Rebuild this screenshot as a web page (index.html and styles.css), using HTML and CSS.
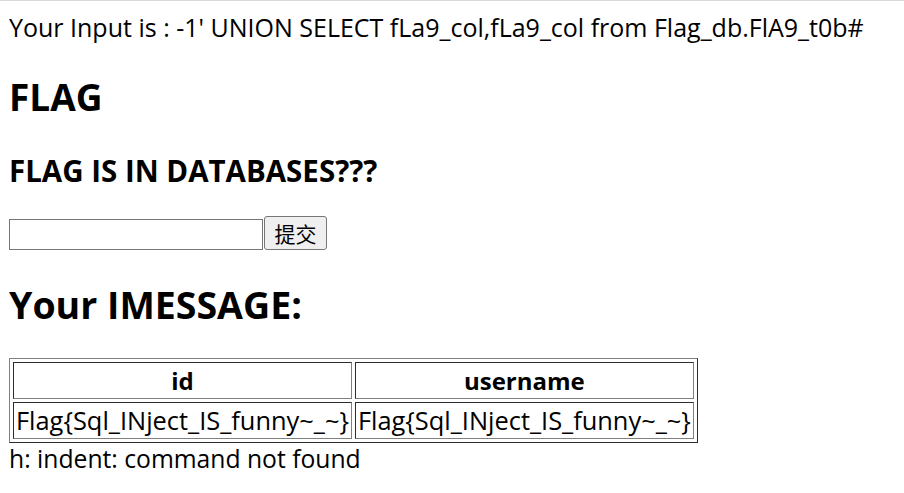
FILE: index.html
```html
<!DOCTYPE html>
<html lang="zh-CN">
<head>
<meta charset="utf-8">
<title>FLAG</title>
<link rel="stylesheet" href="styles.css">
</head>
<body>
<div class="input-echo">Your Input is : -1' UNION SELECT fLa9_col,fLa9_col from Flag_db.FlA9_t0b#</div>
<h2 class="title">FLAG</h2>
<h3 class="subtitle">FLAG IS IN DATABASES???</h3>
<form class="query-form" action="#" method="get">
  <input class="query-input" type="text" name="id">
  <button class="query-btn" type="submit">提交</button>
</form>
<h2 class="title title-msg">Your IMESSAGE:</h2>
<table class="result">
  <tr><th>id</th><th>username</th></tr>
  <tr><td>Flag{Sql_INject_IS_funny~_~}</td><td>Flag{Sql_INject_IS_funny~_~}</td></tr>
</table>
<div class="error">h: indent: command not found</div>
</body>
</html>
```
FILE: styles.css
```css
html {
  border-top: 1px solid #d9d9d9;
  background: #fff;
}
body {
  margin: 10px 9px;
  font-family: "Open Sans", "Noto Sans CJK SC", sans-serif;
  font-size: 25px;
  line-height: 32px;
  color: #000;
}
.input-echo {
  white-space: nowrap;
}
.title {
  font-size: 37px;
  line-height: 48px;
  font-weight: 700;
  margin: 30px 0;
}
.title-msg {
  font-size: 37.5px;
  margin-top: 31px;
  margin-bottom: 29px;
}
.subtitle {
  font-size: 29.5px;
  line-height: 37px;
  font-weight: 700;
  margin: 31px 0 27px;
}
.query-form {
  display: flex;
  align-items: flex-end;
  gap: 1px;
  margin: 0;
}
.query-input {
  box-sizing: border-box;
  width: 254px;
  height: 31px;
  margin: 0;
  padding: 1px 3px;
  border: 1px solid #767676;
  border-radius: 0;
  background: #fff;
  font: 20px "Open Sans", sans-serif;
}
.query-btn {
  box-sizing: border-box;
  width: 63px;
  height: 34px;
  margin: 0;
  padding: 0 6px;
  border: 1px solid #767676;
  border-radius: 3px;
  background: #efefef;
  color: #000;
  font-family: "Noto Sans CJK SC", sans-serif;
  font-size: 21px;
  line-height: 30px;
}
.result {
  border: 1px outset #808080;
  border-spacing: 3px;
  border-collapse: separate;
}
.result th,
.result td {
  border: 1px inset #808080;
  padding: 1px 2px 1px 2px;
  font-size: 25.4px;
  line-height: 33px;
  white-space: nowrap;
}
.result th {
  font-size: 24px;
  font-weight: 700;
  text-align: center;
}
.result td {
  text-align: left;
}
.error {
  font-size: 24.7px;
}
```
